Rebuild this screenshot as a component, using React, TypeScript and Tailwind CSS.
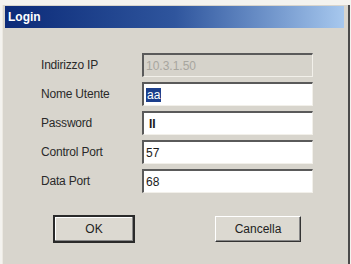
import React from "react";

const font = { fontFamily: '"Liberation Sans", Arial, sans-serif' };

type Field = { label: string; value: string; kind?: "disabled" | "selected" | "password" };

const fields: Field[] = [
  { label: "Indirizzo IP", value: "10.3.1.50", kind: "disabled" },
  { label: "Nome Utente", value: "aa", kind: "selected" },
  { label: "Password", value: "II", kind: "password" },
  { label: "Control Port", value: "57" },
  { label: "Data Port", value: "68" },
];

const FieldRow = ({ field }: { field: Field }) => {
  const disabled = field.kind === "disabled";
  return (
    <div className="flex items-center h-[24px]">
      <div className="w-[101px] text-[12px] text-[#2a2a2a] tracking-[-0.2px]">{field.label}</div>
      <div
        className={`w-[171px] h-[24px] border-t-2 border-l-2 border-t-[#5a5a5a] border-l-[#5a5a5a] border-b border-r border-b-[#f2f0ea] border-r-[#f2f0ea] flex items-center pl-[2px] text-[12px] ${
          disabled ? "bg-[#d6d3cb] text-[#a8a69f]" : "bg-white text-[#1a1a1a]"
        }`}
      >
        {field.kind === "selected" ? (
          <span className="bg-[#1c3f8c] text-white px-[1px] leading-[14px]">{field.value}</span>
        ) : field.kind === "password" ? (
          <span className="font-bold pl-[3px]">{field.value}</span>
        ) : (
          <span>{field.value}</span>
        )}
      </div>
    </div>
  );
};

export default function App() {
  return (
    <div className="w-[351px] h-[264px] bg-[#f4f3ef] pt-[5px] pl-[2px] overflow-hidden" style={font}>
      <div className="w-[348px] h-[259px] bg-[#d8d5cd] border-l border-[#ece9e2] border-r-2 border-r-[#4a4a4a] flex flex-col">
        <div className="ml-[2px] mr-[4px] mt-[1px] h-[22px] bg-gradient-to-r from-[#0c2a78] via-[#2f559d] to-[#a7c8ee] flex items-center pl-[3px]">
          <span className="text-white font-bold text-[12px]">Login</span>
        </div>
        <div className="flex flex-col gap-[5px] pl-[38px] pt-[25px]">
          {fields.map((f) => (
            <FieldRow key={f.label} field={f} />
          ))}
        </div>
        <div className="flex pl-[50px] pt-[22px] gap-[80px]">
          <button className="w-[82px] h-[28px] border-2 border-[#2a2a2a] bg-[#dcd9d1] text-[12px] text-[#222] shadow-[inset_-1px_-1px_0_#888,inset_1px_1px_0_#fff]">
            OK
          </button>
          <button className="w-[86px] h-[26px] mt-[1px] border border-t-[#fff] border-l-[#fff] border-b-[#333] border-r-[#333] bg-[#dcd9d1] text-[12px] text-[#222] shadow-[inset_-1px_-1px_0_#888]">
            Cancella
          </button>
        </div>
      </div>
    </div>
  );
}
